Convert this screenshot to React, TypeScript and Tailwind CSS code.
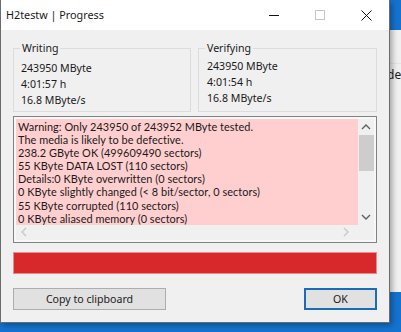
const lines = [
  "Warning: Only 243950 of 243952 MByte tested.",
  "The media is likely to be defective.",
  "238.2 GByte OK (499609490 sectors)",
  "55 KByte DATA LOST (110 sectors)",
  "Details:0 KByte overwritten (0 sectors)",
  "0 KByte slightly changed (< 8 bit/sector, 0 sectors)",
  "55 KByte corrupted (110 sectors)",
  "0 KByte aliased memory (0 sectors)",
];

function Chevron({ dir, color }: { dir: "up" | "down" | "left" | "right"; color: string }) {
  const d = {
    up: "M1 6 L5 2 L9 6",
    down: "M1 2 L5 6 L9 2",
    left: "M6 1 L2 5 L6 9",
    right: "M2 1 L6 5 L2 9",
  }[dir];
  const vertical = dir === "up" || dir === "down";
  return (
    <svg width={vertical ? 10 : 8} height={vertical ? 8 : 10} viewBox={vertical ? "0 0 10 8" : "0 0 8 10"}>
      <path d={d} fill="none" stroke={color} strokeWidth="1.4" />
    </svg>
  );
}

function Group({ title, values, pad }: { title: string; values: string[]; pad: string }) {
  return (
    <div className={`relative h-[64px] flex-1 border border-[#dcdcdc] ${pad}`}>
      <span className="absolute left-[6px] top-[-9px] bg-[#f0f0f0] px-[2px] leading-[16px]">{title}</span>
      {values.map((v) => (
        <div key={v} className="leading-[16px]">
          {v}
        </div>
      ))}
    </div>
  );
}

export default function App() {
  return (
    <div className="relative h-[332px] w-[401px] overflow-hidden bg-[#1473d0] font-['Noto_Sans','Open_Sans',sans-serif] text-[10.6px] text-[#1a1a1a]">
      {/* window behind */}
      <div className="absolute left-[380px] top-[30px] h-[262px] w-[40px] bg-[#f0f0f0] pl-[7px] pt-[33px] text-[12px]">
        <div className="border-t border-[#e4e4e4] pt-[2px]">de</div>
      </div>

      {/* dialog */}
      <div className="absolute left-0 top-0 flex h-[323px] w-[390px] flex-col border-x border-b border-[#6b6b6b] bg-[#f0f0f0] shadow-[2px_2px_6px_rgba(0,0,0,0.35)]">
        <div className="flex h-[30px] shrink-0 items-center bg-white">
          <span className="pl-[5px] text-[10.8px]">H2testw | Progress</span>
          <div className="ml-auto flex h-full items-center">
            <div className="flex h-full w-[46px] items-center justify-center">
              <div className="h-px w-[10px] bg-[#111]" />
            </div>
            <div className="flex h-full w-[46px] items-center justify-center">
              <div className="h-[10px] w-[10px] border border-[#c8c8c8]" />
            </div>
            <div className="flex h-full w-[46px] items-center justify-center">
              <svg width="11" height="11" viewBox="0 0 11 11">
                <path d="M0.5 0.5 L10.5 10.5 M10.5 0.5 L0.5 10.5" stroke="#111" strokeWidth="1" />
              </svg>
            </div>
          </div>
        </div>

        <div className="flex flex-1 flex-col px-[12px]">
          <div className="mt-[18px] flex gap-[7px]">
            <Group title="Writing" values={["243950 MByte", "4:01:57 h", "16.8 MByte/s"]} pad="pl-[7px] pt-[11px]" />
            <Group title="Verifying" values={["243950 MByte", "4:01:54 h", "16.8 MByte/s"]} pad="pl-[8px] pt-[9px]" />
          </div>

          <div className="mt-[4px] flex h-[127px] flex-col border border-[#828282] bg-[#f7f7f7] p-[2px]">
            <div className="flex h-[106px]">
              <div className="flex-1 bg-[#ffcfcf] pl-[2px] pt-[1px] font-['Lato','Noto_Sans',sans-serif] text-[10.9px] leading-[13.1px] tracking-[0.05px]">
                {lines.map((l) => (
                  <div key={l} className="whitespace-nowrap">
                    {l}
                  </div>
                ))}
              </div>
              <div className="flex w-[16px] flex-col items-center bg-[#f0f0f0]">
                <div className="flex h-[16px] items-center">
                  <Chevron dir="up" color="#606060" />
                </div>
                <div className="h-[36px] w-[15px] bg-[#cdcdcd]" />
                <div className="flex-1" />
                <div className="flex h-[16px] items-center">
                  <Chevron dir="down" color="#606060" />
                </div>
              </div>
            </div>
            <div className="flex h-[16px] items-center justify-between bg-[#f0f0f0] pl-[4px] pr-[24px]">
              <Chevron dir="left" color="#c8c8c8" />
              <Chevron dir="right" color="#c8c8c8" />
            </div>
          </div>

          <div className="mt-[9px] h-[22px] border border-[#f08a8a] bg-[#d9282b]" />

          <div className="mt-[14px] flex justify-between">
            <button className="h-[22px] w-[153px] border border-[#adadad] bg-[#e1e1e1] leading-[20px]">
              Copy to clipboard
            </button>
            <button className="h-[22px] w-[73px] border-2 border-[#1a6cb8] bg-[#e1e1e1] leading-[18px]">
              OK
            </button>
          </div>
        </div>
      </div>
    </div>
  );
}
